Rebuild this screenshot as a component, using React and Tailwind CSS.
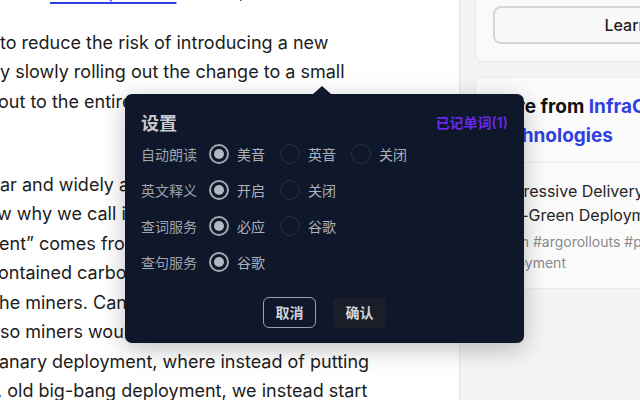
import { useState } from "react"

const LINES_TOP = [
  { text: "to reduce the risk of introducing a new", cls: "ml-0" },
  { text: "y slowly rolling out the change to a small", cls: "ml-0" },
  { text: "out to the entire user base, allowing teams to", cls: "-ml-[2px]" },
]

const LINES_BOTTOM = [
  { text: "ar and widely adopted deployment strategy.", cls: "ml-0" },
  { text: "w why we call it canary deployment? The term", cls: "-ml-[3px]" },
  { text: "ent\u201d comes from the coal mining days, where", cls: "-ml-[1px]" },
  { text: "ontained carbon monoxide and other gases", cls: "-ml-[2px]" },
  { text: "he miners. Canaries are more sensitive to", cls: "-ml-[1px]" },
  { text: "so miners would carry them as an early", cls: "ml-0" },
  { text: "anary deployment, where instead of putting", cls: "-ml-[1px]" },
  { text: ", old big-bang deployment, we instead start", cls: "-ml-[3px]" },
]

const SETTINGS = [
  { label: "自动朗读", key: "voice", options: ["美音", "英音", "关闭"] },
  { label: "英文释义", key: "english", options: ["开启", "关闭"] },
  { label: "查词服务", key: "word", options: ["必应", "谷歌"] },
  { label: "查句服务", key: "sentence", options: ["谷歌"] },
]

function Radio({ checked }) {
  return checked ? (
    <span className="w-[20px] h-[20px] rounded-full border-2 border-[#a3a7b1] flex items-center justify-center shrink-0">
      <span className="w-[10px] h-[10px] rounded-full bg-[#b4b8c2]" />
    </span>
  ) : (
    <span className="w-[20px] h-[20px] rounded-full border border-[#273042] shrink-0" />
  )
}

function SettingsPopup() {
  const [values, setValues] = useState({ voice: 0, english: 0, word: 0, sentence: 0 })

  return (
    <div className="absolute left-[125px] top-[94px] w-[399px] rounded-[7px] bg-[#0f172a] px-4 pt-[14px] pb-[15px] shadow-[0_6px_24px_rgba(0,0,0,0.25)] font-['Noto_Sans_CJK_SC','Inter',sans-serif]">
      {/* arrow */}
      <div className="absolute -top-[8px] left-[188px] w-0 h-0 border-l-[9px] border-r-[9px] border-b-[8px] border-l-transparent border-r-transparent border-b-[#0f172a]" />

      <div className="flex items-center justify-between h-[28px]">
        <h2 className="text-[18px] font-bold text-[#c7cad1]">设置</h2>
        <span className="text-[14px] font-semibold text-[#6a28ea] font-['Inter','Noto_Sans_CJK_SC',sans-serif]">
          已记单词(1)
        </span>
      </div>

      {SETTINGS.map((row) => (
        <div key={row.key} className="flex items-center h-[36px]">
          <span className="w-[68px] shrink-0 text-[14px] text-[#9ea3ad]">{row.label}</span>
          {row.options.map((opt, i) => (
            <label
              key={opt}
              onClick={() => setValues({ ...values, [row.key]: i })}
              className="flex items-center gap-2 w-[71px] shrink-0 cursor-pointer"
            >
              <Radio checked={values[row.key] === i} />
              <span className="text-[14px] text-[#adb1ba]">{opt}</span>
            </label>
          ))}
        </div>
      ))}

      <div className="flex justify-center gap-[17px] mt-[17px]">
        <button className="w-[53px] h-[31px] rounded-[6px] border border-[#9aa0ab] text-[14px] font-bold text-[#cfd2d8]">
          取消
        </button>
        <button className="w-[53px] h-[31px] rounded-[6px] bg-[#191e28] text-[14px] font-bold text-[#cfd2d8]">
          确认
        </button>
      </div>
    </div>
  )
}

export default function App() {
  return (
    <div className="relative w-[640px] h-[400px] overflow-hidden flex bg-white font-['Inter',sans-serif]">

      {/* Article */}
      <main className="w-[459px] shrink-0 overflow-hidden text-[18px] leading-[29.5px] text-[#1c1c1c]">
        <p className="-mt-[23px] pl-[50px] whitespace-nowrap">
          <a className="text-[#2f3fe0] underline decoration-2 underline-offset-[4px] decoration-[#2f3fe0]">rollout process</a>
          <span> and so, we can</span>
        </p>

        <div className="mt-[21px]">
          {LINES_TOP.map((l) => (
            <div key={l.text} className={`whitespace-nowrap ${l.cls}`}>{l.text}</div>
          ))}
          <div className="h-[29.5px]" />
        </div>

        <div className="mt-[24px]">
          {LINES_BOTTOM.map((l) => (
            <div key={l.text} className={`whitespace-nowrap ${l.cls}`}>{l.text}</div>
          ))}
        </div>
      </main>

      {/* Sidebar */}
      <aside className="w-[360px] shrink-0 border-l border-[#e6e6e6] bg-[#f4f4f4] pl-[15px]">
        <div className="-mt-[30px] rounded-lg border border-[#ebebeb] bg-[#fafafa] pt-[35px] pb-[17px] pl-[17px]">
          <button className="w-[310px] h-[38px] rounded-lg border-2 border-[#d5d5d5] bg-[#f8f8f8] text-[16px] font-medium text-[#222]">
            Learn more
          </button>
        </div>

        <div className="mt-[15px] rounded-lg border border-[#ececec] bg-[#fbfbfb] px-[12px] pt-[14px] pb-[15px]">
          <h3 className="text-[19px] leading-[29px] font-bold text-[#111] w-[250px]">
            More from <span className="text-[#2f3fe0]">InfraCloud Technologies</span>
          </h3>
          <div className="mt-[12px] -mx-[12px] border-t border-[#ececec]" />
          <ul className="pt-[16px] text-[16px] leading-[24px] text-[#262626]">
            <li>Progressive Delivery</li>
            <li>Blue-Green Deployment</li>
          </ul>
          <p className="mt-[4px] w-[250px] text-[14px] leading-[21px] text-[#8a8a8a]">
            #helm #argorollouts #progressive deployment
          </p>
        </div>
      </aside>

      <SettingsPopup />
    </div>
  )
}
